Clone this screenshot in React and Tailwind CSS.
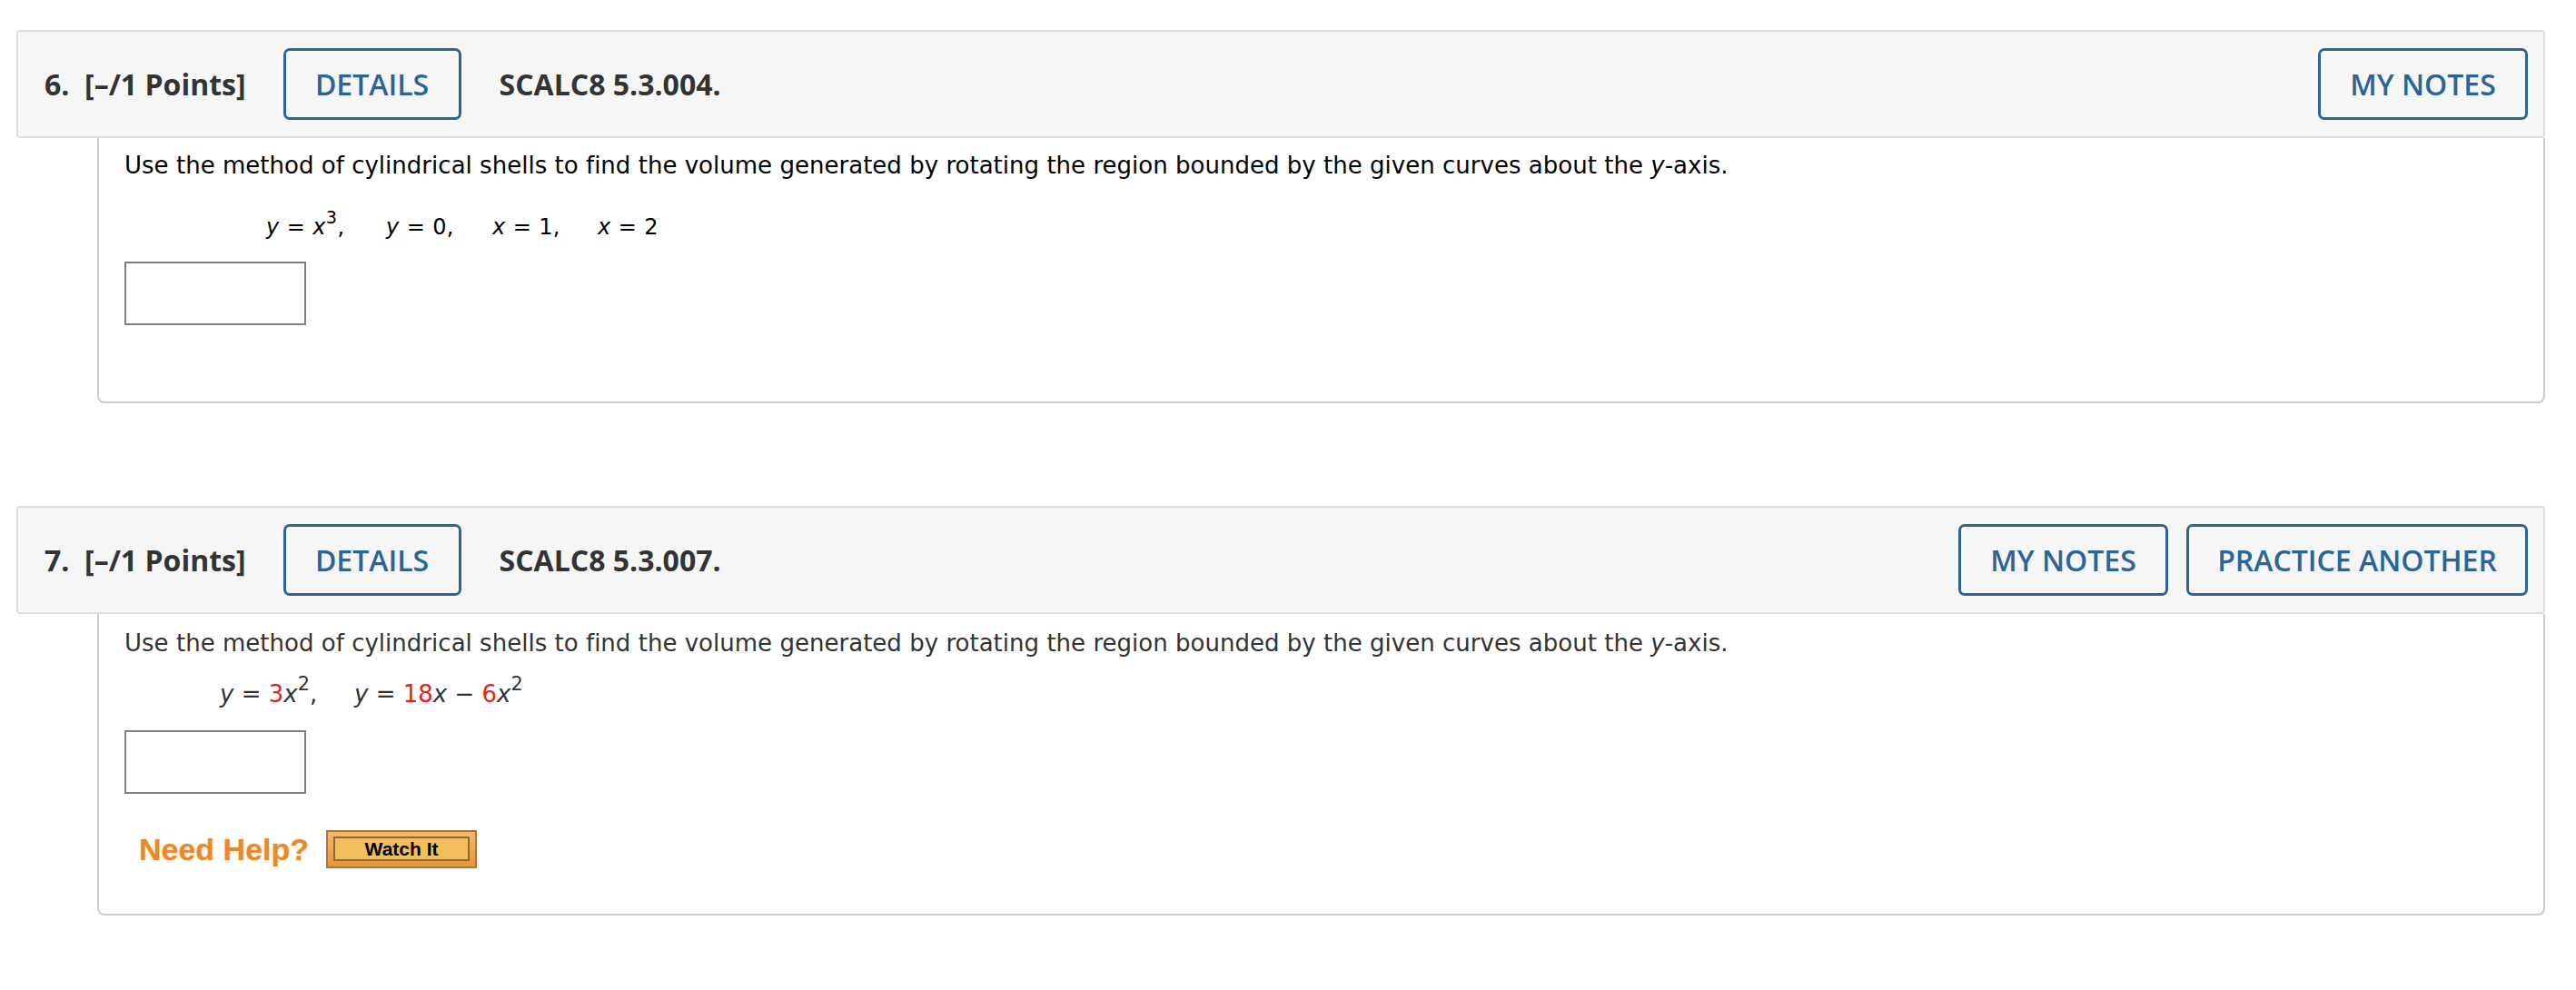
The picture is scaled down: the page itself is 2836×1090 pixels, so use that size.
import React from 'react';

const head = { fontFamily: '"Open Sans", "Noto Sans", sans-serif' };
const body = { fontFamily: '"DejaVu Sans", Verdana, sans-serif' };
const arial = { fontFamily: '"Liberation Sans", Arial, sans-serif' };

function Btn({ w, children }) {
  return (
    <div
      className={`h-[79px] ${w} flex items-center justify-center border-[3px] border-[#2b6496] rounded-[7px] text-[#2b6496] text-[32px] font-semibold`}
    >
      {children}
    </div>
  );
}

function Header({ num, code, practice }) {
  return (
    <div
      style={head}
      className="h-[119px] flex items-center bg-[#f6f6f6] border-2 border-[#dedede] rounded-[4px] pl-[29px] pr-[17px]"
    >
      <div className="text-[32px] font-bold text-[#333] whitespace-pre">{num}.  [–/1 Points]</div>
      <div className="ml-[41px]">
        <Btn w="w-[196px]">DETAILS</Btn>
      </div>
      <div className="ml-[42px] text-[32px] font-bold text-[#333]">{code}</div>
      <div className="ml-auto flex gap-[20px]">
        <Btn w="w-[231px]">MY NOTES</Btn>
        {practice && <Btn w="w-[376px]">PRACTICE ANOTHER</Btn>}
      </div>
    </div>
  );
}

function Sup({ children }) {
  return <span className="relative top-[-0.62em] text-[0.8em] leading-none align-baseline">{children}</span>;
}

function AnswerBox() {
  return <div className="w-[200px] h-[70px] border-2 border-[#808080] bg-white" />;
}

const sentence = (
  <>
    Use the method of cylindrical shells to find the volume generated by rotating the region bounded by the
    given curves about the <i>y</i>-axis.
  </>
);

export default function App() {
  return (
    <div className="pt-[33px] pl-[18px] pr-[34px] bg-white min-h-screen">
      {/* question 6 */}
      <Header num="6" code="SCALC8 5.3.004." />
      <div
        style={body}
        className="ml-[89px] border-2 border-t-0 border-[#cccccc] rounded-b-[8px] bg-white pl-[28px] pt-[12px] pb-[84px] text-black"
      >
        <div className="text-[26px] leading-[36px] tracking-[0.02px]">{sentence}</div>
        <div className="mt-[34px] ml-[156px] flex text-[24px] leading-[32px] whitespace-pre tracking-[0.4px]">
          <span className="w-[132px]"><i>y</i> = <i>x</i><Sup>3</Sup>,</span>
          <span className="w-[117px]"><i>y</i> = 0,</span>
          <span className="w-[116px]"><i>x</i> = 1,</span>
          <span><i>x</i> = 2</span>
        </div>
        <div className="mt-[22px]">
          <AnswerBox />
        </div>
      </div>

      {/* question 7 */}
      <div className="mt-[113px]">
        <Header num="7" code="SCALC8 5.3.007." practice />
      </div>
      <div
        style={body}
        className="ml-[89px] border-2 border-t-0 border-[#cccccc] rounded-b-[8px] bg-white pl-[28px] pt-[14px] pb-[50px] text-[#333]"
      >
        <div className="text-[26px] leading-[36px] tracking-[0.02px]">{sentence}</div>
        <div className="mt-[20px] ml-[105px] flex text-[26px] leading-[36px] whitespace-pre">
          <span className="w-[148px]">
            <i>y</i> = <span className="text-[#e3241b]">3</span><i>x</i><Sup>2</Sup>,
          </span>
          <span>
            <i>y</i> = <span className="text-[#e3241b]">18</span><i>x</i> − <span className="text-[#e3241b]">6</span><i>x</i><Sup>2</Sup>
          </span>
        </div>
        <div className="mt-[22px]">
          <AnswerBox />
        </div>
        <div className="mt-[40px] ml-[16px] flex items-center gap-[19px]">
          <div
            style={{ ...arial, textShadow: '0 0 3px rgba(236,150,60,0.45)' }}
            className="text-[34px] font-bold text-[#e8892c] leading-none"
          >
            Need Help?
          </div>
          <div className="w-[166px] h-[42px] border-2 border-[#b07434] bg-gradient-to-b from-[#f4b968] to-[#e6953a] px-[6px] pt-[5px] pb-[6px]">
            <div
              style={arial}
              className="h-full border-2 border-[#8d6a3a] bg-[#f3bf5c] flex items-center justify-center text-[21px] font-bold text-black leading-none"
            >
              Watch It
            </div>
          </div>
        </div>
      </div>
    </div>
  );
}
